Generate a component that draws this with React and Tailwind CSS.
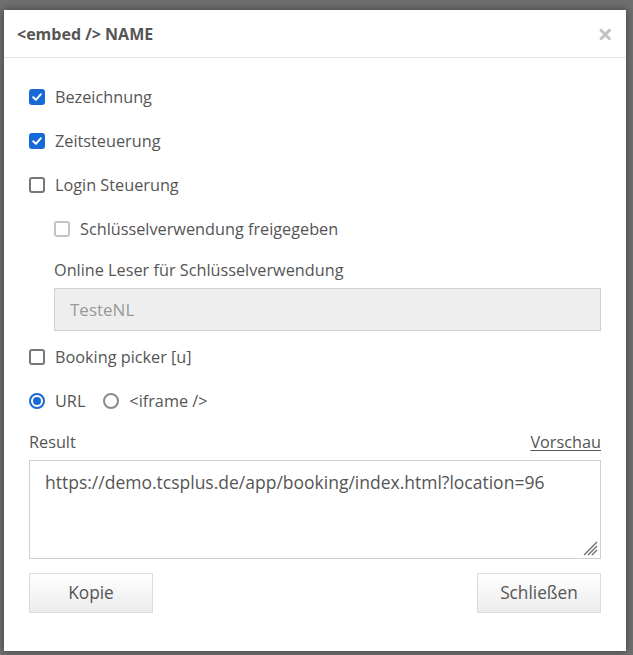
import React from "react";

const font = { fontFamily: '"Open Sans", "Noto Sans", sans-serif' };

const Check = ({ checked, faded }) =>
  checked ? (
    <span className="flex h-[16px] w-[16px] items-center justify-center rounded-[3px] bg-[#1769d6]">
      <svg width="12" height="12" viewBox="0 0 12 12">
        <path d="M2.2 6.2 L4.9 8.8 L9.9 3.2" fill="none" stroke="#fff" strokeWidth="2" strokeLinecap="round" strokeLinejoin="round" />
      </svg>
    </span>
  ) : (
    <span
      className={
        "block h-[16px] w-[16px] rounded-[3px] border-2 bg-white " +
        (faded ? "border-[#c4c4c4]" : "border-[#777]")
      }
    />
  );

const Radio = ({ checked }) =>
  checked ? (
    <span className="flex h-[16px] w-[16px] items-center justify-center rounded-full border-2 border-[#1769d6] bg-white">
      <span className="block h-[8px] w-[8px] rounded-full bg-[#1769d6]" />
    </span>
  ) : (
    <span className="block h-[16px] w-[16px] rounded-full border-2 border-[#8a8a8a] bg-white" />
  );

const Row = ({ children, indent }) => (
  <div className={"flex h-[44px] items-center gap-[10px] " + (indent ? "pl-[25px]" : "")}>
    {children}
  </div>
);

export default function App() {
  return (
    <div className="h-[655px] overflow-hidden bg-[#6f6f6f] pl-[4px] pt-[10px]" style={font}>
      <div className="w-[622px] bg-white text-[16.25px] text-[#555] shadow-[0_0_8px_rgba(0,0,0,0.45)]">
        <div className="flex h-[48px] items-center justify-between border-b border-[#e3e3e3] pl-[13px] pr-[13px]">
          <span className="text-[16px] font-bold text-[#555]">&lt;embed /&gt; NAME</span>
          <span className="text-[27px] font-bold leading-none text-[#c2c2c2]">×</span>
        </div>

        <div className="px-[25px] pb-[38px] pt-[17px]">
          <Row>
            <Check checked />
            <span>Bezeichnung</span>
          </Row>
          <Row>
            <Check checked />
            <span>Zeitsteuerung</span>
          </Row>
          <Row>
            <Check />
            <span>Login Steuerung</span>
          </Row>
          <Row indent>
            <Check faded />
            <span>Schlüsselverwendung freigegeben</span>
          </Row>
          <div className="pl-[25px]">
            <div className="mt-[7px] leading-[24px]">Online Leser für Schlüsselverwendung</div>
            <div className="mt-[6px] flex h-[43px] items-center border border-[#cfcfcf] bg-[#eeeeee] px-[15px] text-[17px] text-[#999]">
              TesteNL
            </div>
          </div>
          <div className="mt-[4px]">
            <Row>
              <Check />
              <span>Booking picker [u]</span>
            </Row>
          </div>
          <div className="flex h-[44px] items-center">
            <Radio checked />
            <span className="ml-[10px]">URL</span>
            <span className="ml-[18px]">
              <Radio />
            </span>
            <span className="ml-[10px]">&lt;iframe /&gt;</span>
          </div>
          <div className="mt-[7px] flex items-center justify-between leading-[24px]">
            <span>Result</span>
            <span className="underline underline-offset-2">Vorschau</span>
          </div>
          <div className="relative mt-[6px] h-[99px] border border-[#cfcfcf] bg-white px-[15px] pt-[8px] text-[17.5px] leading-[26px] text-[#555]">
            https://demo.tcsplus.de/app/booking/index.html?location=96
            <svg className="absolute bottom-[2px] right-[2px]" width="16" height="16" viewBox="0 0 16 16">
              <path d="M15 2 L2 15 M15 6 L6 15 M15 10 L10 15" stroke="#666" strokeWidth="1.2" />
            </svg>
          </div>
          <div className="mt-[14px] flex justify-between text-[17.25px]">
            <div className="flex h-[40px] w-[124px] items-center justify-center border border-[#dcdcdc] bg-gradient-to-b from-white to-[#ececec] text-[#555]">
              Kopie
            </div>
            <div className="flex h-[40px] w-[124px] items-center justify-center border border-[#dcdcdc] bg-gradient-to-b from-white to-[#ececec] text-[#555]">
              Schließen
            </div>
          </div>
        </div>
      </div>
    </div>
  );
}
